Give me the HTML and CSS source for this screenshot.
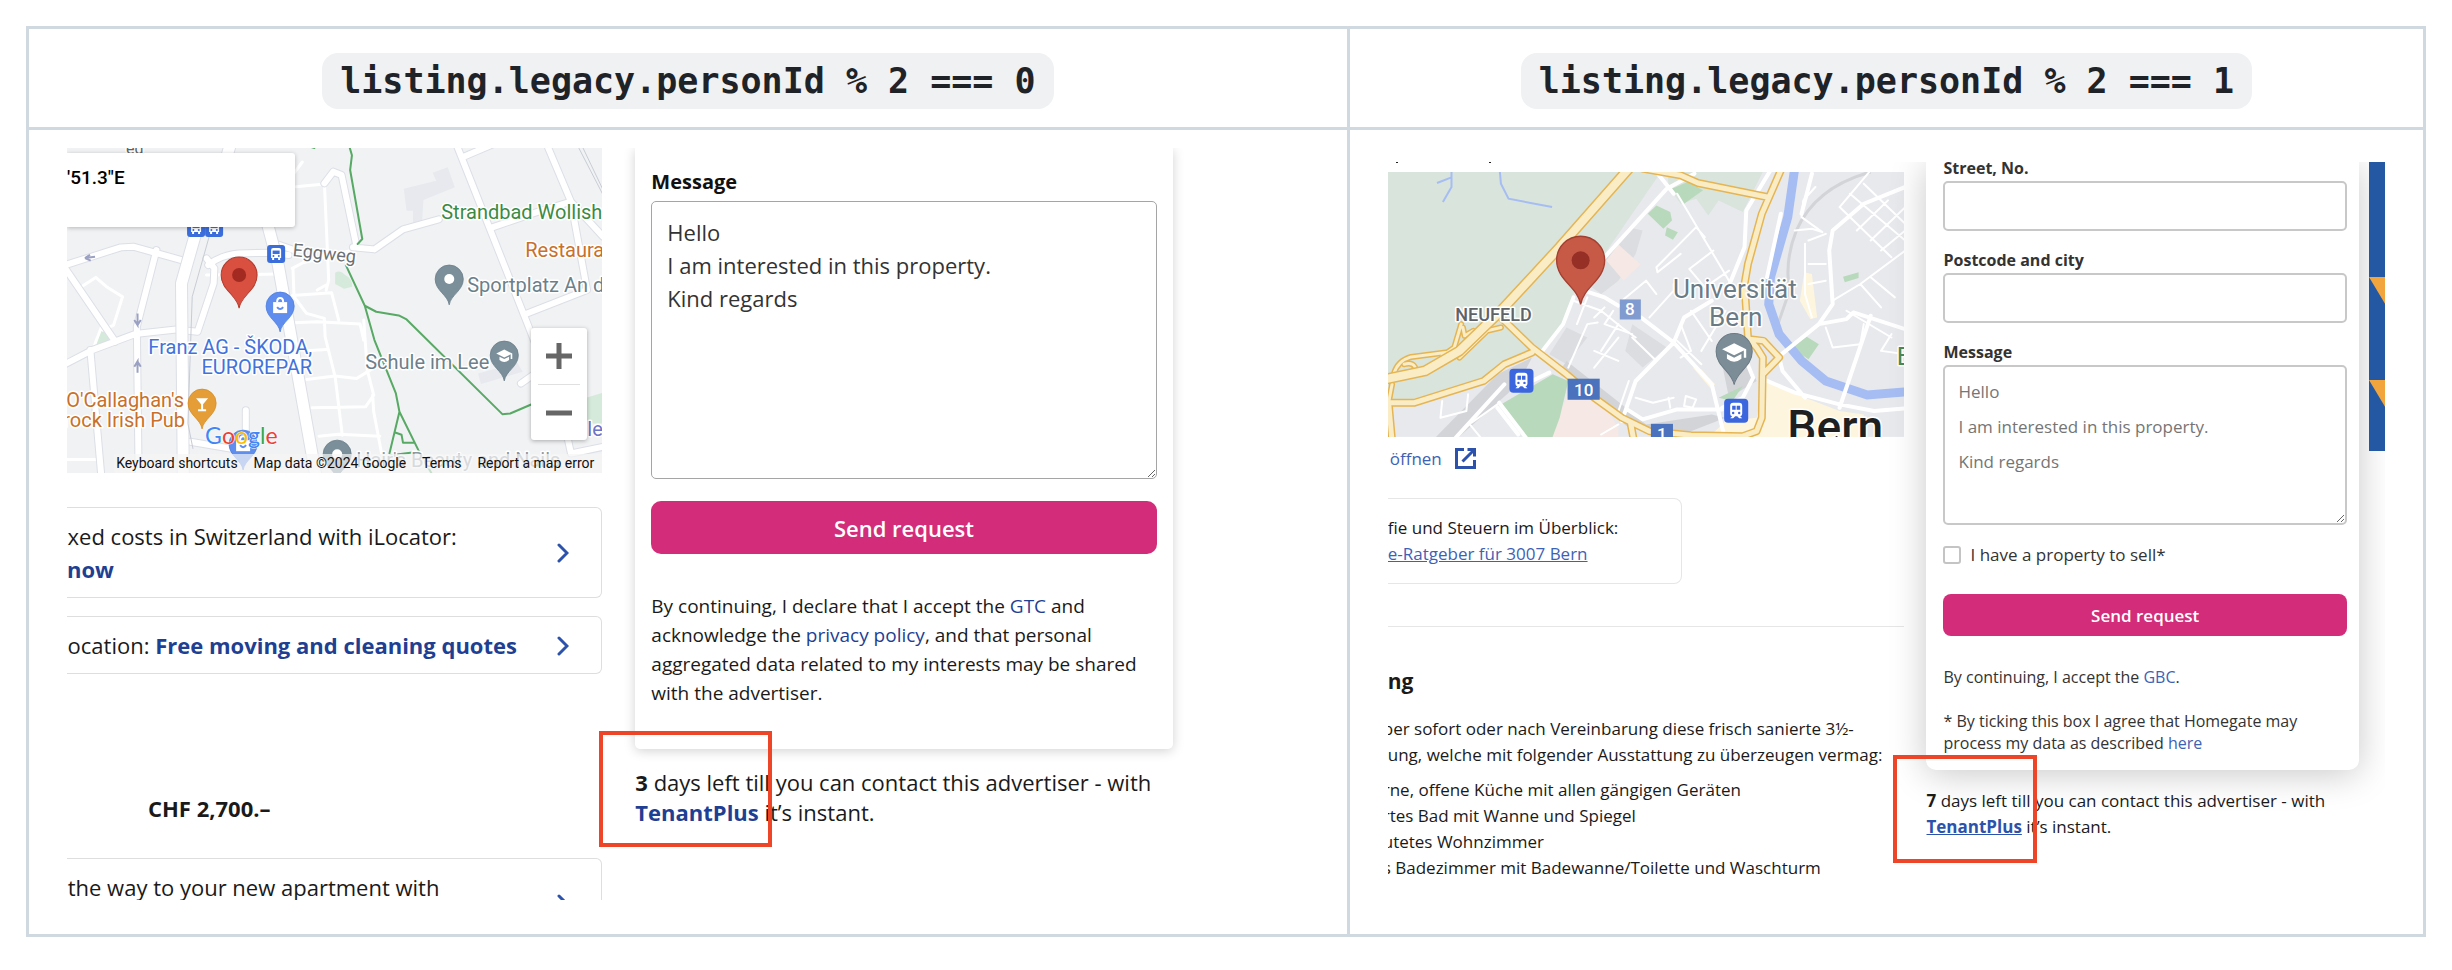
FILE: index.html
```html
<!DOCTYPE html>
<html lang="en">
<head>
<meta charset="utf-8">
<title>Tenant contact variants</title>
<link rel="stylesheet" href="styles.css">
</head>
<body>
<svg class="defs" aria-hidden="true">
  <defs>
    <path id="pin" d="M0 33C-2 20-18 15-18 0A18 18 0 1 1 18 0C18 15 2 20 0 33Z"/>
    <g id="bus">
      <rect width="18" height="18" rx="3" fill="#3b6ddb"/>
      <path d="M4 5q0-2 2-2h6q2 0 2 2v8h-1v2h-2v-2H7v2H5v-2H4z" fill="#fff"/>
      <path d="M5.500 5.500h7v3.500h-7z" fill="#3b6ddb"/>
      <circle cx="6.300" cy="11" r="1" fill="#3b6ddb"/><circle cx="11.700" cy="11" r="1" fill="#3b6ddb"/>
    </g>
    <g id="train">
      <rect width="24" height="24" rx="4" fill="#3b66dd"/>
      <path d="M6 7q0-3 3-3h6q3 0 3 3v8q0 2-2 2.500l2 2h-3l-2-2h-2l-2 2H6l2-2Q6 17 6 15z" fill="#fff"/>
      <path d="M8 7h3.500v4H8zM12.500 7H16v4h-3.500z" fill="#3b66dd"/>
      <circle cx="9" cy="14.200" r="1.200" fill="#3b66dd"/><circle cx="15" cy="14.200" r="1.200" fill="#3b66dd"/>
    </g>
    <g id="cap" fill="#fff">
      <path d="M0-7L-10-2 0 3 8-1v6h2v-7z"/><path d="M-6 2v4Q0 11 6 6V2L0 5z"/>
    </g>
    <g id="bag">
      <path d="M-7-4H7V7H-7z" fill="#fff"/>
      <path d="M-3-4q0-4 3-4t3 4" fill="none" stroke="#fff" stroke-width="2"/>
      <path d="M-3 1q3 4 6 0" fill="none" stroke="#5f8eee" stroke-width="2"/>
    </g>
  </defs>
</svg>
<main class="page">
<table class="compare">
  <colgroup><col class="col-even"><col class="col-odd"></colgroup>
  <thead>
    <tr>
      <th scope="col"><code>listing.legacy.personId % 2 === 0</code></th>
      <th scope="col"><code>listing.legacy.personId % 2 === 1</code></th>
    </tr>
  </thead>
  <tbody>
    <tr>
      <td class="cell-even">
        <div class="shot shot-even">
          <section class="side">
            <div class="map map-zurich">
              <svg viewBox="0 0 535 325" preserveAspectRatio="xMidYMid slice" role="img" aria-label="Map">
                <rect width="535" height="325" fill="#f0f2f4"/>
                <g transform="translate(-7 -8) scale(.3571 .3333)">
                  <path fill="#e7e9ee" d="M1043 98L1085 82 1105 142 1017 180 1013 250 988 250 988 212 970 212 962 146 1053 122zM1170 700L1280 668 1295 695 1178 732z"/>
                  <path fill="#d5eadb" d="M115 555L142 603 90 628zM1475 772L1520 758V850H1470zM770 398Q785 388 798 405 818 415 818 440L795 446 770 432z"/>
                  <g class="minor">
                    <path d="M660 140L740 132M740 130L752 420 745 450 M650 466L760 458 780 540M652 385L655 470 690 520 740 535M655 548L720 545 840 552 850 600M740 540L742 590 770 710 790 885M850 540L860 690 878 765 855 800 705 803M690 718L770 708 830 715 868 690M875 765L878 815 900 940M725 888L780 882 895 888M410 405L610 402M690 632L745 628M60 440L100 412 130 440 175 470 150 555 120 570M95 620L118 555M0 958L105 958M655 100L678 66M720 450L745 435M650 385L680 368 820 330"/>
                  </g>
                  <g class="casing">
                    <path id="zr" d="M0 380L170 322 205 320 340 360M270 330L215 560 220 1000M15 385L155 605M0 680L90 630 210 582 325 568 385 575 430 430 432 385 410 355M415 375Q450 345 500 340L590 338 640 345M85 630L115 1000M600 310L655 330 M740 130L765 95 788 105 830 320M820 322L880 328 960 268 1060 238M1112 20L1330 610M1130 50L1240 0M1210 262L1330 218 1430 185M1365 20L1430 185 1475 450 1298 524M1430 185L1520 290M520 810V930M365 905L530 935M1290 730L1330 700M1420 890L1430 940 1520 920"/>
                  </g>
                  <use href="#zr" class="road"/>
                  <path class="main-casing" d="M475 20L420 220 385 260 340 430 345 1000M578 240L610 370 715 1000"/>
                  <path class="main" d="M475 20L420 220 385 260 340 430 345 1000M578 240L610 370 715 1000"/>
                  <path class="thin" d="M420 280L370 470 358 850 372 925M1450 20L1520 165M1462 20L1520 150"/>
                  <path class="trail" d="M810 20L817 46 812 90 846 297 833 312M800 375L853 497 880 600 940 760 950 815 1003 930 1040 1000M853 497L885 515 948 526 970 538 1238 822 1260 820 1330 788M950 815L922 940M940 878L956 884 960 908 990 908M925 945L1003 935M700 20L712 24"/>
                  <g fill="none" stroke="#9aa1c2" stroke-width="2"><path d="M98 350L70 354 84 344M70 354L86 362M217 520V555L208 540M217 555L226 540M217 698V664L208 680M217 664L226 680"/></g>
                </g>
                <g class="halo roboto">
                  <text x="59" y="6" font-size="16" fill="#5f6368">eg</text>
                  <text x="374" y="71" font-size="20" fill="#3c8a43">Strandbad Wollishofen</text>
                  <text x="458" y="109" font-size="20" fill="#c9702a">Restaurant</text>
                  <text x="400" y="144" font-size="20" fill="#6d7f8a">Sportplatz An der</text>
                  <text x="225" y="108" font-size="18" fill="#6b7075" transform="rotate(6 225 108)">Eggweg</text>
                  <text x="245" y="206" font-size="20" fill="#4272db" text-anchor="end">Franz AG - ŠKODA,</text>
                  <text x="245" y="226" font-size="20" fill="#4272db" text-anchor="end">EUROREPAR</text>
                  <text x="298" y="221" font-size="20" fill="#6d7f8a">Schule im Lee</text>
                  <text x="117" y="259" font-size="20" fill="#c9702a" text-anchor="end">O'Callaghan's</text>
                  <text x="118" y="279" font-size="20" fill="#c9702a" text-anchor="end">Shamrock Irish Pub</text>
                  <text x="289" y="319" font-size="20" fill="#8d989f">Hair's Beauty and Nails</text>
                  <text x="520" y="288" font-size="20" fill="#6a74c8">le</text>
                </g>
                <use href="#bus" x="120" y="71"/><use href="#bus" x="138" y="71"/><use href="#bus" x="200" y="97"/>
                <g transform="translate(382 131)"><use href="#pin" transform="scale(.78)" fill="#7b8f9b" stroke="#687b87"/><circle r="5" fill="#fff"/></g>
                <g transform="translate(213 158)"><use href="#pin" transform="scale(.78)" fill="#5f8eee" stroke="#4a7ce0"/><use href="#bag"/></g>
                <g transform="translate(437 207)"><use href="#pin" transform="scale(.78)" fill="#7b8f9b" stroke="#687b87"/><use href="#cap" transform="scale(.8)"/></g>
                <g transform="translate(135 255)"><use href="#pin" transform="scale(.78)" fill="#e59e37" stroke="#d68c22"/><path d="M-6-5H6L1 1V6H4V8H-4V6H-1V1z" fill="#fff"/></g>
                <g transform="translate(270 306)"><use href="#pin" transform="scale(.78)" fill="#7b8f9b" stroke="#687b87"/><circle r="5" fill="#fff"/></g>
                <g transform="translate(176 296)"><use href="#pin" transform="scale(.78)" fill="#5f8eee" stroke="#4a7ce0"/><use href="#bag"/></g>
                <g transform="translate(172 127)"><use href="#pin" fill="#d94f40" stroke="#b23a2d"/><circle r="7" fill="#a32a20"/></g>
                <text class="halo logo" x="138" y="296" font-size="23"><tspan fill="#4285f4">G</tspan><tspan fill="#ea4335">o</tspan><tspan fill="#fbbc05">o</tspan><tspan fill="#4285f4">g</tspan><tspan fill="#34a853">l</tspan><tspan fill="#ea4335">e</tspan></text>
              </svg>
              <div class="map-info">'51.3"E</div>
              <div class="map-zoom">
                <button type="button" aria-label="Zoom in"><svg width="26" height="26" viewBox="0 0 26 26"><path d="M0 13H26M13 0V26" stroke="#666" stroke-width="5"/></svg></button>
                <button type="button" aria-label="Zoom out"><svg width="26" height="26" viewBox="0 0 26 26"><path d="M0 13H26" stroke="#666" stroke-width="5"/></svg></button>
              </div>
              <div class="map-legal"><button type="button">Keyboard shortcuts</button><span>Map data ©2024 Google</span><a href="#terms">Terms</a><a href="#report">Report a map error</a></div>
            </div>
            <div class="promos">
              <div class="promo"><p>ixed costs in Switzerland with iLocator:<br><a href="#ilocator">now</a></p><svg class="chevron" viewBox="0 0 12 20"><path d="M2 2L10 10 2 18"/></svg></div>
              <div class="promo"><p>location: <a href="#moving">Free moving and cleaning quotes</a></p><svg class="chevron" viewBox="0 0 12 20"><path d="M2 2L10 10 2 18"/></svg></div>
            </div>
            <p class="price">CHF 2,700.–</p>
            <div class="promo"><p>&nbsp;the way to your new apartment with<br><a href="#tenantplus">TenantPlus</a></p><svg class="chevron" viewBox="0 0 12 20"><path d="M2 2L10 10 2 18"/></svg></div>
          </section>
          <section class="contact">
            <form class="card">
              <label for="message-a">Message</label>
              <textarea id="message-a">Hello
I am interested in this property.
Kind regards</textarea>
              <button type="button" class="send">Send request</button>
              <p class="terms">By continuing, I declare that I accept the <a href="#gtc">GTC</a> and acknowledge the <a href="#privacy">privacy policy</a>, and that personal aggregated data related to my interests may be shared with the advertiser.</p>
            </form>
            <p class="notice"><strong>3</strong> days left till you can contact this advertiser - with <a href="#plus">TenantPlus</a> it’s instant.<span class="marker"></span></p>
          </section>
        </div>
      </td>
      <td class="cell-odd">
        <div class="shot shot-odd">
          <section class="side">
            <svg class="cut-line" viewBox="0 0 515 10" preserveAspectRatio="xMinYMin meet" aria-hidden="true"><path d="M8 0h2v1H8zM101 0h2v1h-2z" fill="#222"/></svg>
            <div class="map map-bern">
              <svg viewBox="0 0 515 264" preserveAspectRatio="xMidYMid slice" role="img" aria-label="Map of Bern">
                <rect width="515" height="264" fill="#e8e9ed"/>
                <g transform="translate(-8 -21.700) scale(.3444 .3333)">
                  <path fill="#d9e4dc" d="M0 40H830L650 310 560 430 530 530 465 605 350 640 290 700 100 760 0 760zM830 40H1120L1050 185 980 150 950 195 915 145 870 160 835 110z"/>
                  <path fill="#dcdde1" d="M760 240L740 310 690 390 640 430 600 400 720 230zM540 530L600 560 540 640 490 610zM730 520L830 590 760 650 710 600z"/>
                  <path fill="#d3d4d8" d="M150 870L340 670 440 620 400 700 215 870zM540 630L700 760 770 820 960 790 1000 800 900 840 720 830 520 660zM990 640L1060 620 1090 690 1010 740z"/>
                  <path fill="#f5e8e5" d="M690 282L755 342 705 390 655 330zM540 740L640 745 690 830 690 870H480z"/>
                  <path fill="#fdf5dd" d="M1110 690L1180 720 1330 780 1400 790 1400 870H940L1000 810 1090 800zM1228 365L1250 370 1265 500 1245 505 1215 450zM905 650L930 655 970 700 955 710z"/>
                  <path fill="#b9d9bc" d="M845 115L890 95 935 120 880 160zM775 190L800 165 840 185 845 210 820 235zM830 230L862 245 848 268 825 255zM1340 378L1385 365 1385 382 1345 395zM1190 590L1235 558 1270 580 1240 625zM350 760L500 670 545 690 520 800 495 870H430zM980 740L1050 705 1020 750z"/>
                  <path fill="none" stroke="#d2d4d8" stroke-width="3" d="M1420 65Q1260 110 1205 240 1170 330 1185 420L1145 540"/>
                  <path fill="none" stroke="#a6bdf3" stroke-width="9" d="M1200 55L1180 200 1130 380 1125 460 1155 550 1220 630 1290 690 1410 732 1530 722"/>
                  <path fill="none" stroke="#a6bdf3" stroke-width="2" d="M165 98L205 82M207 65V110L182 155M347 65L350 100 372 145 498 170"/>
                  <g class="minor-bern">
                    <path d="M860 130L1010 390M800 350L915 230 940 260M800 350L803 365 870 310M895 355L965 300M895 355L940 410 1010 360M560 450L640 480 700 530 740 560M600 440L570 520M650 470L620 500M675 480L650 520 730 550M640 600L690 520M620 600L690 630M545 650L600 520 630 515M700 450L770 390 800 430M690 560L620 650M730 560L800 630M780 500L850 420 850 400M870 520L900 600 870 620M900 480L960 570M1000 480L930 600M860 570L930 640M850 740L790 755 740 740M835 740L840 770M885 735L915 745 905 770 880 765zM1240 270L1290 250M1230 280V430L1250 500M1240 340L1290 340M1240 400L1290 390M1330 170L1420 60M1330 170L1480 320M1360 130L1520 270M1400 100L1520 220M1420 270L1520 170M1450 300L1520 240M1380 240L1470 150M1310 450L1390 400 1520 300M1390 400L1450 470M1290 530L1310 590 1390 580 1400 520M1350 480L1480 560M1420 380L1490 440M1260 110L1225 150 1220 200 1280 245M1280 245L1250 235 1200 240M1480 550L1450 600 1520 610M180 750L175 800 250 780 255 730M265 815L340 760M260 820L300 870M640 850L690 820M720 690L690 780"/>
                  </g>
                  <g class="white-road">
                    <path d="M910 70L830 115 650 320M560 440L530 520 470 600M440 690L490 665M345 755L430 870M210 870L360 700M590 420L650 440 690 465M755 500L850 575 960 700 1000 870M960 450L880 500 850 575 740 690 700 810M715 775L760 805 860 775 990 775M800 65L850 130M1130 60L1060 180 1055 290 1000 430M1160 190L1120 380M1250 70L1220 190M1520 110L1400 160 1310 240 1300 300 1310 460 1270 520 1150 620M1270 520L1350 505 1370 485 1520 535M1420 495L1330 770M1110 685L1200 725 1330 760 1430 780 1520 772M1155 620L1165 660 1230 740M1060 630L1080 680 1050 740 990 770M340 770L400 850"/>
                  </g>
                  <g class="gold">
                    <path id="major" d="M350 500L440 590 540 670 620 740 700 800 780 840 900 852 1050 855 1090 840 1105 800 1108 620 1090 590 1065 560 1055 400 1065 340 1105 190 1160 60M920 98L1120 140M760 55L870 75 920 98M440 605L360 640 300 690 100 755 25 755 35 870M1070 565L1110 570 1155 620 1108 670M725 815L735 870"/>
                  </g>
                  <g class="gold slim">
                    <path id="ramps" d="M40 670Q50 630 90 618L190 605M235 520L215 590 180 615M240 530L245 555 270 540M70 640Q100 630 105 660M350 530L310 540 230 620M35 700L25 755"/>
                  </g>
                  <use href="#ramps" class="cream slim"/>
                  <use href="#major" class="cream"/>
                  <path class="gold wide" d="M720 55L520 290 350 480 230 600 130 660 0 688"/>
                  <path class="cream wide" d="M720 55L520 290 350 480 230 600 130 660 0 688"/>
                </g>
                <g class="halo roboto">
                  <text x="67" y="149" font-size="18" font-weight="500" fill="#5f6368">NEUFELD</text>
                  <text x="284" y="126" font-size="26" fill="#6b7b86">Universität</text>
                  <text x="320" y="153" font-size="26" fill="#6b7b86">Bern</text>
                  <text x="507" y="192" font-size="25" fill="#4a8a53">E</text>
                  <text x="398" y="270" font-size="46" font-weight="500" fill="#1f1f1f">Bern</text>
                </g>
                <g class="roboto" font-size="17" font-weight="500" fill="#fff" text-anchor="middle">
                  <rect x="231" y="127" width="21" height="20" fill="#7f9bd0"/><text x="241" y="143">8</text>
                  <rect x="179" y="206" width="32" height="21" fill="#4a72bd"/><text x="195" y="223">10</text>
                  <rect x="262" y="251" width="22" height="21" fill="#4a72bd"/><text x="273" y="267">1</text>
                </g>
                <use href="#train" x="121" y="196"/><use href="#train" x="335" y="226"/>
                <g transform="translate(345 179)"><use href="#pin" fill="#7d8d98" stroke="#6a7a85"/><use href="#cap" transform="scale(1.200)"/></g>
                <g transform="translate(192 88)"><use href="#pin" transform="scale(1.330)" fill="#c65a47" stroke="#a33f31"/><circle r="9" fill="#962f25"/></g>
              </svg>
            </div>
            <a class="open-map" href="#map">öffnen<svg width="21" height="21" viewBox="0 0 21 21"><path d="M9 1.500H1.500V19.500H19.500V12M12.500 1.500H19.500V8.500M19 2L7.500 13.500"/></svg></a>
            <div class="guide"><p>fie und Steuern im Überblick:<br><a href="#guide">e-Ratgeber für 3007 Bern</a></p></div>
            <h2>ng</h2>
            <p class="desc">ber sofort oder nach Vereinbarung diese frisch sanierte 3½-<br>ung, welche mit folgender Ausstattung zu überzeugen vermag:</p>
            <ul class="features">
              <li>rne, offene Küche mit allen gängigen Geräten</li>
              <li>rtes Bad mit Wanne und Spiegel</li>
              <li>utetes Wohnzimmer</li>
              <li>s Badezimmer mit Badewanne/Toilette und Waschturm</li>
            </ul>
          </section>
          <section class="contact">
            <form class="card">
              <label for="street">Street, No.</label>
              <input id="street" type="text">
              <label for="city">Postcode and city</label>
              <input id="city" type="text">
              <label for="message-b">Message</label>
              <textarea id="message-b">Hello
I am interested in this property.
Kind regards</textarea>
              <div class="check"><input id="sell" type="checkbox"><label for="sell">I have a property to sell*</label></div>
              <button type="button" class="send">Send request</button>
              <p class="terms">By continuing, I accept the <a href="#gbc">GBC</a>.</p>
              <p class="terms">* By ticking this box I agree that Homegate may process my data as described <a href="#here">here</a></p>
            </form>
            <p class="notice"><strong>7</strong> days left till you can contact this advertiser - with <a href="#plus">TenantPlus</a> it’s instant.<span class="marker"></span></p>
          </section>
          <aside class="banner">
            <svg viewBox="0 0 16 289" preserveAspectRatio="none" aria-hidden="true"><rect width="16" height="289" fill="#2558a3"/><path d="M0 115H16V142ZM0 218H16V245Z" fill="#f2a53c"/></svg>
          </aside>
        </div>
      </td>
    </tr>
  </tbody>
</table>
</main>
</body>
</html>
```

FILE: styles.css
```css
* { box-sizing: border-box; }
body {
  margin: 0;
  background: #fff;
  color: #1a1a1a;
  font-family: "Open Sans", "Noto Sans", sans-serif;
}
p, h2, ul { margin: 0; padding: 0; }
a { color: #1f3f93; text-decoration: none; }
button { font: inherit; border: 0; cursor: pointer; }
.defs { position: absolute; width: 0; height: 0; }
.page { padding: 26px; }

.compare {
  width: 100%;
  table-layout: fixed;
  border-collapse: collapse;
}
.col-even { width: 55.1%; }
.col-odd { width: 44.9%; }
.compare th, .compare td { border: 3px solid #d1d9e0; vertical-align: top; }
.compare th { height: 101px; padding: 5px 0 0; vertical-align: middle; }
.compare td { padding: 18px 38px 34px; }
.compare .cell-odd { padding-top: 32px; padding-bottom: 32px; }
code {
  display: inline-block;
  padding: 7px 18px;
  border-radius: 16px;
  background: #eff1f3;
  color: #1f2328;
  font: bold 35px/42px "DejaVu Sans Mono", monospace;
}

.shot { display: grid; overflow: hidden; }
.shot-even {
  grid-template-columns: 535fr 537fr 103fr;
  column-gap: 33px;
  height: 752px;
}
.shot-odd { grid-template-columns: 537fr 431fr 26fr; height: 740px; }
.side { min-width: 0; white-space: nowrap; }
.shot-odd .side { padding-right: 22px; }

.map { position: relative; overflow: hidden; }
.map > svg { display: block; width: 100%; height: 100%; }
.map-zurich { aspect-ratio: 535 / 325; }
.map-bern { aspect-ratio: 515 / 264; }
.cut-line { display: block; width: 100%; height: 10px; }
.map path { vector-effect: non-scaling-stroke; }
.minor, .minor-bern, .casing, .road, .main, .main-casing, .thin, .trail, .white-road, .gold, .cream {
  fill: none;
  stroke-linejoin: round;
  stroke-linecap: round;
}
.minor { stroke: #fff; stroke-width: 3px; }
.minor-bern { stroke: #fff; stroke-width: 2px; }
.casing { stroke: #dcdfe6; stroke-width: 8px; }
.road { stroke: #fff; stroke-width: 6px; }
.main-casing { stroke: #dcdfe6; stroke-width: 13px; }
.main { stroke: #fff; stroke-width: 11px; }
.thin { stroke: #c9ccd4; stroke-width: 1px; }
.trail { stroke: #57a964; stroke-width: 2px; }
.white-road { stroke: #fff; stroke-width: 4px; }
.gold { stroke: #e5b553; stroke-width: 8px; }
.cream { stroke: #faedc6; stroke-width: 5px; }
.gold.slim { stroke-width: 6px; }
.cream.slim { stroke-width: 3px; }
.gold.wide { stroke-width: 11px; }
.cream.wide { stroke-width: 8px; }
.roboto { font-family: Roboto, sans-serif; }
.halo { paint-order: stroke; stroke: #fff; stroke-width: 3px; stroke-linejoin: round; }
.logo { font-family: Lato, sans-serif; stroke-width: 1px; }

.map-info {
  position: absolute;
  top: 5px;
  left: 0;
  width: 228px;
  height: 74px;
  padding: 14px 0;
  border-radius: 0 3px 3px 0;
  background: #fff;
  box-shadow: 0 1px 4px rgba(0, 0, 0, .25);
  color: #000;
  font: 500 19px/22px Roboto, sans-serif;
}
.map-zoom {
  position: absolute;
  right: 15px;
  bottom: 33px;
  width: 56px;
  padding: 0 7px;
  border-radius: 3px;
  background: #fff;
  box-shadow: 0 1px 4px rgba(0, 0, 0, .3);
}
.map-zoom button {
  display: grid;
  place-items: center;
  width: 100%;
  height: 56px;
  padding: 0;
  background: none;
}
.map-zoom button + button { border-top: 1px solid #e0e0e0; }
.map-legal {
  position: absolute;
  right: 0;
  bottom: 0;
  display: flex;
  gap: 16px;
  padding: 0 8px 0 2px;
  background: rgba(245, 245, 245, .7);
  color: #111;
  font: 14px/19px Roboto, sans-serif;
}
.map-legal a { color: inherit; }
.map-legal button { padding: 0; background: none; color: inherit; }

.promos { display: grid; gap: 18px; margin: 34px 0 118px; }
.promo {
  display: flex;
  align-items: center;
  justify-content: space-between;
  padding: 12px 32px 11px 0;
  border: 1px solid #dedede;
  border-left: 0;
  border-radius: 0 6px 6px 0;
  font-size: 22px;
  line-height: 33px;
}
.promo p, .guide p, .desc, .features { text-indent: -5px; }
.promo a { font-weight: 700; }
.chevron { width: 12px; height: 20px; fill: none; stroke: #2d52ab; stroke-width: 3px; stroke-linecap: round; }
.price { margin-bottom: 33px; padding-left: 81px; font-size: 22px; line-height: 33px; font-weight: 700; }

.contact { position: relative; min-width: 0; }
.card {
  display: flex;
  flex-direction: column;
  background: #fff;
}
.card label { font-weight: 700; }
.card input, .card textarea {
  display: block;
  width: 100%;
  margin: 0;
  border: 1px solid #a5a5a5;
  border-radius: 5px;
  background: #fff;
  color: #333;
  font-family: inherit;
}
.send { background: #d32c7a; color: #fff; font-weight: 600; }

.shot-even .card {
  padding: 20px 16px 41px;
  border-radius: 0 0 5px 5px;
  box-shadow: 0 2px 12px rgba(0, 0, 0, .18);
}
.shot-even .card label { font-size: 20px; line-height: 28px; color: #111; margin-bottom: 5px; }
.shot-even textarea { height: 278px; padding: 14px 15px; font-size: 22px; line-height: 33px; }
.shot-even .send { height: 53px; margin: 22px 0 38px; border-radius: 10px; font-size: 22px; }
.shot-even .terms { font-size: 19px; line-height: 29px; }
.notice { position: relative; }
.notice a { font-weight: 700; }
.marker { position: absolute; border: 4px solid #ee4427; }
.shot-even .notice { padding-top: 18px; font-size: 22px; line-height: 30px; }
.shot-even .marker { top: -18px; left: -36px; width: 173px; height: 116px; }

.shot-odd a { color: #3d62b5; }
.shot-odd .card {
  padding: 0 12px 16px 17px;
  border-radius: 0 0 10px 10px;
  box-shadow: 0 4px 36px rgba(0, 0, 0, .22);
}
.shot-odd .card > label { font-size: 16px; line-height: 22px; color: #333; margin: -5px 0 2px; }
.shot-odd .card > input { height: 50px; margin-bottom: 23px; border: 2px solid #c8c8c8; }
.shot-odd textarea { height: 160px; padding: 7px 13px; border: 2px solid #c8c8c8; color: #757575; font-size: 17px; line-height: 35px; }
.check { display: flex; align-items: center; gap: 9px; margin: 17px 0 26px; line-height: 26px; font-size: 17px; }
.card .check label { font-weight: 400; color: #333; }
.card .check input { appearance: none; width: 18px; height: 18px; border: 2px solid #c4c4c4; border-radius: 3px; }
.shot-odd .send { height: 42px; margin-bottom: 30px; border-radius: 8px; font-size: 17px; }
.shot-odd .terms { font-size: 16px; line-height: 22px; color: #333; }
.shot-odd .terms + .terms { margin-top: 22px; }
.shot-odd .notice { padding-top: 18px; font-size: 17px; line-height: 26px; }
.shot-odd .notice a { color: #2d52ab; text-decoration: underline; }
.shot-odd .marker { top: -15px; left: -33px; width: 144px; height: 108px; }

.open-map { display: flex; align-items: center; gap: 13px; padding: 9px 2px; font-size: 17px; line-height: 26px; }
.open-map svg { fill: none; stroke: #2d52ab; stroke-width: 3px; }
.guide { padding-bottom: 42px; border-bottom: 1px solid #e6e6e6; margin-top: 17px; font-size: 17px; line-height: 26px; }
.guide p { width: 57%; padding: 16px 0; border: 1px solid #e6e6e6; border-left: 0; border-radius: 0 8px 8px 0; text-indent: 0; }
.guide a { text-decoration: underline; }
.shot-odd h2 { margin-top: 38px; font-size: 21px; line-height: 32px; }
.desc { margin-top: 19px; font-size: 17px; line-height: 26px; }
.features { margin-top: 9px; list-style: none; font-size: 17px; line-height: 26px; }
.banner { padding-left: 10px; position: relative; }
.banner svg { display: block; width: 100%; height: 289px; }
```
